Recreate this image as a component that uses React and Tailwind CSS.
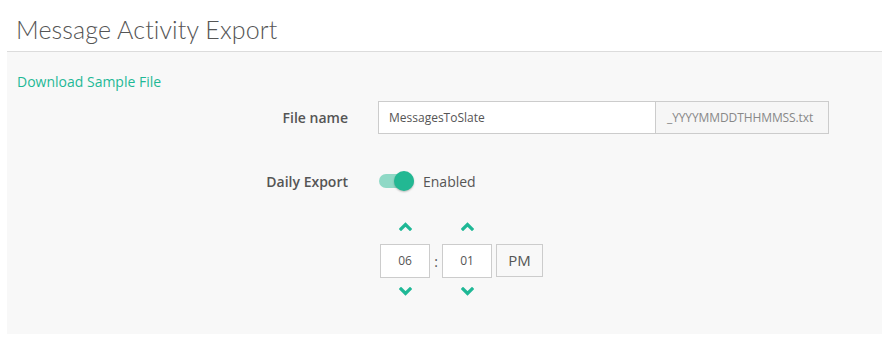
import { useState } from 'react';

function Chevron({ up }) {
  return (
    <svg width="13" height="9" viewBox="0 0 13 9" className="block">
      <path
        d={up ? 'M2 7 L6.5 2.5 L11 7' : 'M2 2 L6.5 6.5 L11 2'}
        fill="none"
        stroke="#1fb896"
        strokeWidth="3.2"
        strokeLinecap="square"
      />
    </svg>
  );
}

function TimeBox({ value }) {
  return (
    <div className="flex flex-col items-center">
      <button className="h-5 w-[50px] flex items-center justify-center">
        <Chevron up />
      </button>
      <div className="mt-2 w-[50px] h-[34px] border border-[#ccc] bg-white flex items-center justify-center text-[12px] text-[#555]">
        {value}
      </div>
      <button className="mt-[3px] h-5 w-[50px] flex items-center justify-center">
        <Chevron />
      </button>
    </div>
  );
}

export default function App() {
  const [enabled, setEnabled] = useState(true);

  return (
    <div className="bg-white h-[363px] w-[882px] overflow-hidden" style={{ fontFamily: '"Open Sans", sans-serif' }}>
      <div className="h-[51px] pl-4 pt-[13px]">
        <h1 className="text-[25px] font-light leading-[32px] text-[#555] tracking-[0.1px]" style={{ fontFamily: 'Lato, "Open Sans", sans-serif' }}>
          Message Activity Export
        </h1>
      </div>

      <div className="ml-[7px] h-[283px] border-t border-[#dcdcdc] bg-[#f8f8f8] pt-5">
        <a href="#" className="block pl-[10px] text-[14px] leading-5 text-[#1fb896]">
          Download Sample File
        </a>

        <div className="mt-[9px] flex items-center">
          <label className="w-[341px] text-right text-[14px] font-semibold text-[#555]">File name</label>
          <div className="ml-[30px] flex h-[33px]">
            <input
              className="w-[278px] h-full border border-[#ccc] bg-white px-[10px] text-[12px] text-[#555] outline-none"
              defaultValue="MessagesToSlate"
            />
            <span className="w-[173px] h-full border border-l-0 border-[#ccc] bg-[#f6f6f6] flex items-center pl-[11px] text-[12px] text-[#888] tracking-[-0.1px]">
              _YYYYMMDDTHHMMSS.txt
            </span>
          </div>
        </div>

        <div className="mt-[30px] flex items-center h-[34px]">
          <label className="w-[341px] text-right text-[14px] font-semibold text-[#555]">Daily Export</label>
          <div className="ml-[31px] flex items-center">
            <button
              onClick={() => setEnabled(!enabled)}
              className={`relative w-[35px] h-[14px] rounded-full ${enabled ? 'bg-[#8fd9c6]' : 'bg-[#ccc]'}`}
            >
              <span
                className={`absolute top-[-3px] w-5 h-5 rounded-full shadow-[0_1px_2px_rgba(0,0,0,0.25)] ${enabled ? 'right-0 bg-[#22b893]' : 'left-0 bg-white'}`}
              />
            </button>
            <span className="ml-[9px] text-[14px] text-[#555]">{enabled ? 'Enabled' : 'Disabled'}</span>
          </div>
        </div>

        <div className="mt-[18px] flex items-start pl-[373px]">
          <TimeBox value="06" />
          <span className="w-3 mt-[28px] h-[34px] flex items-center justify-center text-[14px] text-[#555]">:</span>
          <TimeBox value="01" />
          <button className="ml-1 mt-[28px] w-[47px] h-[33px] border border-[#ccc] bg-[#f8f8f8] text-[15px] text-[#555]">
            PM
          </button>
        </div>
      </div>
    </div>
  );
}
